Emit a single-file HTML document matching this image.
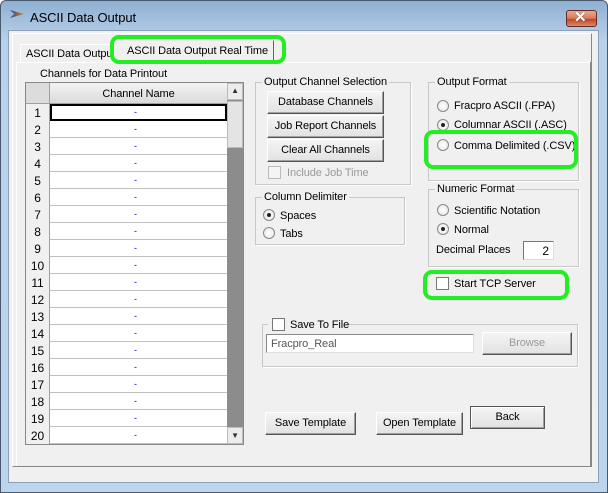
<!DOCTYPE html>
<html><head><style>
*{box-sizing:border-box;margin:0;padding:0}
body{width:608px;height:493px;position:relative;overflow:hidden;font-family:"Liberation Sans",sans-serif;font-size:11px;letter-spacing:-0.1px;color:#000;background:#fff}
.a{position:absolute}
.win{left:0;top:0;width:608px;height:493px;background:linear-gradient(#8fb0d2,#b9d1ea 40px,#bcd4ec);border:1px solid #4a5a6e;border-radius:6px 6px 0 0}
.client{left:8px;top:30px;width:591px;height:453px;background:#f0f0f0;border:1px solid #8aa0b8}
.btn{position:absolute;background:linear-gradient(#f4f4f4,#e2e2e2);border:1px solid #fff;border-right-color:#555;border-bottom-color:#555;box-shadow:inset -1px -1px 0 #a0a0a0;text-align:center;line-height:21px}
.grp{position:absolute;border:1px solid #c8c8c8;box-shadow:1px 1px 0 #fff}
.grp>span{position:absolute;top:-7px;left:6px;background:#f0f0f0;padding:0 2px}
.rad{position:absolute;width:12px;height:12px;border-radius:50%;border:1px solid #888;background:radial-gradient(#fff,#e4e4e4)}
.rad.on::after{content:"";position:absolute;left:3px;top:3px;width:4px;height:4px;border-radius:50%;background:#222}
.chk{position:absolute;width:13px;height:13px;border:1px solid #777;background:#fff}
.lbl{position:absolute;white-space:nowrap;transform:translateY(1px)}
.green{position:absolute;border:4px solid #22ee22;border-radius:9px}
.row{position:absolute;left:0;width:217px;height:17px;border-bottom:1px solid #c0c0c0}
.rn{position:absolute;left:0;top:0;width:24px;height:17px;background:#f0f0f0;border-right:1px solid #a0a0a0;text-align:center;line-height:18px;font-size:12px}
.dot{position:absolute;left:108px;top:1px;color:#00c;line-height:14px;font-size:9px}
</style></head><body>
<div class="a win"></div>
<div class="a" style="left:10px;top:10px;width:14px;height:8px;background:linear-gradient(90deg,#2a4a8a,#e08030);clip-path:polygon(0 0,100% 50%,0 100%,30% 50%)"></div>
<div class="lbl" style="left:30px;top:9px;font-size:13px">ASCII Data Output</div>
<div class="a" style="left:566px;top:10px;width:31px;height:17px;border:1px solid #6a2a2a;border-radius:3px;background:linear-gradient(#e9a98c,#d67a5a 50%,#c0442a 55%,#d88a6a)"></div>
<div class="lbl" style="left:574px;top:7px;color:#fff;font-weight:bold;font-size:15px;text-shadow:0 0 1px #333">✕</div>
<div class="a client"></div>
<div class="a" style="left:12px;top:33px;width:580px;height:434px;border:1px solid #fff;border-right-color:#888;border-bottom-color:#888"></div>
<div class="a" style="left:20px;top:44px;width:95px;height:19px;background:#f0f0f0;border:1px solid #fff;border-right:none;border-bottom:none"></div>
<div class="lbl" style="left:26px;top:47px">ASCII Data Outpu</div>
<div class="a" style="left:114px;top:40px;width:160px;height:22px;background:#f0f0f0;border:1px solid #fff;border-right-color:#666;border-bottom:none"></div>
<div class="lbl" style="left:127px;top:44px">ASCII Data Output Real Time</div>
<div class="a" style="left:16px;top:62px;width:98px;border-top:1px solid #fff"></div>
<div class="a" style="left:274px;top:62px;width:316px;border-top:1px solid #fff"></div>
<div class="a" style="left:16px;top:62px;height:404px;border-left:1px solid #fff"></div>
<div class="a" style="left:590px;top:62px;height:405px;border-left:1px solid #888"></div>
<div class="a" style="left:16px;top:466px;width:575px;border-top:1px solid #888"></div>
<div class="green" style="left:110px;top:35px;width:176px;height:29px"></div>
<div class="lbl" style="left:40px;top:67px">Channels for Data Printout</div>
<div class="a" style="left:25px;top:82px;width:219px;height:363px;border:1px solid #888;background:#fff">
<div class="a" style="left:0;top:0;width:24px;height:21px;background:#dcdcdc;border-right:1px solid #a0a0a0;border-bottom:1px solid #a0a0a0"></div>
<div class="a" style="left:24px;top:0;width:177px;height:21px;background:linear-gradient(#f4f4f4,#dadada);border-bottom:1px solid #a0a0a0;text-align:center;line-height:22px">Channel Name</div>
<div class="a" style="left:0;top:21px;width:201px;height:340px">
<div class="row" style="top:0"><div class="rn">1</div><div class="dot">-</div></div>
<div class="row" style="top:17px"><div class="rn">2</div><div class="dot">-</div></div>
<div class="row" style="top:34px"><div class="rn">3</div><div class="dot">-</div></div>
<div class="row" style="top:51px"><div class="rn">4</div><div class="dot">-</div></div>
<div class="row" style="top:68px"><div class="rn">5</div><div class="dot">-</div></div>
<div class="row" style="top:85px"><div class="rn">6</div><div class="dot">-</div></div>
<div class="row" style="top:102px"><div class="rn">7</div><div class="dot">-</div></div>
<div class="row" style="top:119px"><div class="rn">8</div><div class="dot">-</div></div>
<div class="row" style="top:136px"><div class="rn">9</div><div class="dot">-</div></div>
<div class="row" style="top:153px"><div class="rn">10</div><div class="dot">-</div></div>
<div class="row" style="top:170px"><div class="rn">11</div><div class="dot">-</div></div>
<div class="row" style="top:187px"><div class="rn">12</div><div class="dot">-</div></div>
<div class="row" style="top:204px"><div class="rn">13</div><div class="dot">-</div></div>
<div class="row" style="top:221px"><div class="rn">14</div><div class="dot">-</div></div>
<div class="row" style="top:238px"><div class="rn">15</div><div class="dot">-</div></div>
<div class="row" style="top:255px"><div class="rn">16</div><div class="dot">-</div></div>
<div class="row" style="top:272px"><div class="rn">17</div><div class="dot">-</div></div>
<div class="row" style="top:289px"><div class="rn">18</div><div class="dot">-</div></div>
<div class="row" style="top:306px"><div class="rn">19</div><div class="dot">-</div></div>
<div class="row" style="top:323px"><div class="rn">20</div><div class="dot">-</div></div>
</div>
<div class="a" style="left:24px;top:21px;width:177px;height:17px;border:2px solid #000"></div>
<div class="a" style="left:201px;top:0;width:16px;height:361px;background:#8c8c8c"></div>
<div class="a" style="left:201px;top:0;width:16px;height:17px;background:#ececec;border:1px solid #bbb;font-size:8px;text-align:center;line-height:14px;color:#333">▲</div>
<div class="a" style="left:201px;top:18px;width:16px;height:47px;background:#e4e4e4;border:1px solid #bbb"></div>
<div class="a" style="left:201px;top:344px;width:16px;height:17px;background:#ececec;border:1px solid #bbb;font-size:8px;text-align:center;line-height:15px;color:#333">▼</div>
</div>
<div class="grp" style="left:255px;top:82px;width:156px;height:103px"><span>Output Channel Selection</span></div>
<div class="btn" style="left:267px;top:91px;width:117px;height:23px">Database Channels</div>
<div class="btn" style="left:267px;top:115px;width:117px;height:23px">Job Report Channels</div>
<div class="btn" style="left:267px;top:139px;width:117px;height:23px">Clear All Channels</div>
<div class="chk" style="left:268px;top:166px;border-color:#bbb;background:#f4f4f4"></div>
<div class="lbl" style="left:287px;top:166px;color:#999">Include Job Time</div>
<div class="grp" style="left:255px;top:197px;width:150px;height:48px"><span>Column Delimiter</span></div>
<div class="rad on" style="left:263px;top:209px"></div><div class="lbl" style="left:280px;top:209px">Spaces</div>
<div class="rad" style="left:263px;top:227px"></div><div class="lbl" style="left:280px;top:227px">Tabs</div>
<div class="grp" style="left:428px;top:82px;width:151px;height:99px"><span>Output Format</span></div>
<div class="rad" style="left:437px;top:100px"></div><div class="lbl" style="left:454px;top:99px">Fracpro ASCII (.FPA)</div>
<div class="rad on" style="left:437px;top:119px"></div><div class="lbl" style="left:454px;top:118px">Columnar ASCII (.ASC)</div>
<div class="rad" style="left:437px;top:139px"></div><div class="lbl" style="left:454px;top:139px">Comma Delimited (.CSV)</div>
<div class="green" style="left:424px;top:130px;width:154px;height:39px"></div>
<div class="grp" style="left:428px;top:189px;width:151px;height:78px"><span>Numeric Format</span></div>
<div class="rad" style="left:437px;top:204px"></div><div class="lbl" style="left:454px;top:204px">Scientific Notation</div>
<div class="rad on" style="left:437px;top:223px"></div><div class="lbl" style="left:454px;top:223px">Normal</div>
<div class="lbl" style="left:436px;top:243px">Decimal Places</div>
<div class="a" style="left:523px;top:241px;width:31px;height:19px;background:#fff;border:1px solid #777;border-right-color:#ddd;border-bottom-color:#ddd;text-align:right;padding-right:4px;line-height:18px;font-size:12px">2</div>
<div class="chk" style="left:436px;top:277px"></div><div class="lbl" style="left:454px;top:277px">Start TCP Server</div>
<div class="green" style="left:423px;top:270px;width:146px;height:30px"></div>
<div class="grp" style="left:262px;top:324px;width:316px;height:43px"></div>
<div class="a" style="left:268px;top:318px;width:78px;height:14px;background:#f0f0f0"></div>
<div class="chk" style="left:272px;top:318px"></div><div class="lbl" style="left:290px;top:318px">Save To File</div>
<div class="a" style="left:266px;top:334px;width:208px;height:19px;background:#fff;border:1px solid #888;border-right-color:#e0e0e0;border-bottom-color:#e0e0e0;color:#555;padding-left:4px;line-height:18px">Fracpro_Real</div>
<div class="btn" style="left:482px;top:332px;width:90px;height:23px;color:#999">Browse</div>
<div class="btn" style="left:265px;top:412px;width:91px;height:23px">Save Template</div>
<div class="btn" style="left:376px;top:412px;width:87px;height:23px">Open Template</div>
<div class="btn" style="left:470px;top:406px;width:75px;height:23px;border:1px solid #555;box-shadow:inset 1px 1px 0 #fff,inset -1px -1px 0 #a0a0a0">Back</div>
</body></html>
